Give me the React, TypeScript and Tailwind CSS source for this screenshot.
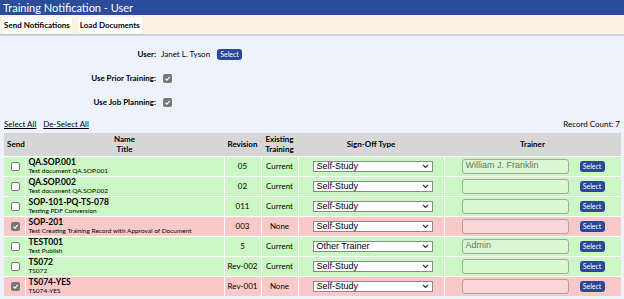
import React from "react";

type Row = {
  name: string;
  title: string;
  rev: string;
  existing: string;
  signOff: string;
  trainer: string;
  checked: boolean;
};

const rows: Row[] = [
  { name: "QA.SOP.001", title: "Test document QA.SOP.001", rev: "05", existing: "Current", signOff: "Self-Study", trainer: "William J. Franklin", checked: false },
  { name: "QA.SOP.002", title: "Test document QA.SOP.002", rev: "02", existing: "Current", signOff: "Self-Study", trainer: "", checked: false },
  { name: "SOP-101-PQ-TS-078", title: "Testing PDF Conversion", rev: "011", existing: "Current", signOff: "Self-Study", trainer: "", checked: false },
  { name: "SOP-201", title: "Test Creating Training Record with Approval of Document", rev: "003", existing: "None", signOff: "Self-Study", trainer: "", checked: true },
  { name: "TEST001", title: "Test Publish", rev: "5", existing: "Current", signOff: "Other Trainer", trainer: "Admin", checked: false },
  { name: "TS072", title: "TS072", rev: "Rev-002", existing: "Current", signOff: "Self-Study", trainer: "", checked: false },
  { name: "TS074-YES", title: "TS074-YES", rev: "Rev-001", existing: "None", signOff: "Self-Study", trainer: "", checked: true },
];

const Check = ({ checked }: { checked: boolean }) =>
  checked ? (
    <span className="inline-flex h-[9px] w-[9px] items-center justify-center rounded-[2px] bg-[#767676]">
      <svg width="7" height="7" viewBox="0 0 10 10">
        <path d="M2 5.2 L4.2 7.3 L8.2 2.6" fill="none" stroke="white" strokeWidth="1.8" />
      </svg>
    </span>
  ) : (
    <span className="inline-block h-[9px] w-[9px] rounded-[2px] border border-[#767676] bg-white" />
  );

const SelectBtn = () => (
  <span className="inline-flex h-[11px] w-[25px] items-center justify-center rounded-[3px] bg-[#2a4799] text-[7px] text-white">
    Select
  </span>
);

const App = () => {
  return (
    <div className="h-[299px] w-[624px] overflow-hidden bg-[#eef2fb] font-['Lato','Open_Sans',sans-serif] text-black">
      {/* Title bar */}
      <div className="flex h-[15px] items-center bg-[#2d4b9b] px-[3px] text-[11px] leading-none text-white">
        Training Notification - User
      </div>
      {/* Toolbar */}
      <div className="flex h-[21px] items-center gap-[6px] border-b-2 border-[#c3cfee] bg-[#fdf1e2] px-[2px] text-[8px] font-bold">
        <span className="rounded-[2px] bg-white px-[2px] py-[2px]">Send Notifications</span>
        <span className="rounded-[2px] bg-white px-[2px] py-[2px]">Load Documents</span>
      </div>

      {/* Options */}
      <div className="flex flex-col gap-[10px] pt-[11px] text-[8px]">
        <div className="flex h-[14px] items-center">
          <span className="w-[156px] text-right font-bold">User:</span>
          <span className="ml-[5px] w-[56px]">Janet L. Tyson</span>
          <SelectBtn />
        </div>
        <div className="flex h-[14px] items-center">
          <span className="w-[156px] text-right font-bold">Use Prior Training:</span>
          <span className="ml-[7px] flex"><Check checked /></span>
        </div>
        <div className="flex h-[14px] items-center">
          <span className="w-[156px] text-right font-bold">Use Job Planning:</span>
          <span className="ml-[7px] flex"><Check checked /></span>
        </div>
      </div>

      <div className="mt-[9px] flex items-center justify-between px-[4px] text-[8px]">
        <div className="flex gap-[7px] underline">
          <span>Select All</span>
          <span>De-Select All</span>
        </div>
        <span>Record Count: 7</span>
      </div>

      {/* Table */}
      <table className="ml-[4px] mt-[3px] w-[617px] table-fixed border-collapse">
        <colgroup>
          <col className="w-[21px]" />
          <col className="w-[199px]" />
          <col className="w-[37px]" />
          <col className="w-[37px]" />
          <col className="w-[146px]" />
          <col className="w-[177px]" />
        </colgroup>
        <thead>
          <tr className="h-[23px] bg-[#d6d6d6] text-[8px] font-bold leading-[10px]">
            <th className="pl-[3px] text-left">Send</th>
            <th className="text-center">
              Name
              <br />
              Title
            </th>
            <th>Revision</th>
            <th>
              Existing
              <br />
              Training
            </th>
            <th>Sign-Off Type</th>
            <th>Trainer</th>
          </tr>
        </thead>
        <tbody>
          {rows.map((r) => {
            const bg = r.checked ? "bg-[#f9c9c9]" : "bg-[#caf7c3]";
            const inputBg = r.checked ? "bg-[#fbd6d6]" : "bg-[#d8f8d1]";
            return (
              <tr key={r.name} className={`h-[20px] border-t border-white ${bg}`}>
                <td className="border-r border-white p-0 text-center">
                  <span className="flex justify-center pl-[3px]">
                    <Check checked={r.checked} />
                  </span>
                </td>
                <td className="border-r border-white p-0 pl-[3px]">
                  <div className="text-[8.5px] font-bold leading-[10px]">{r.name}</div>
                  <div className="text-[6.5px] leading-[8px]">{r.title}</div>
                </td>
                <td className="border-r border-white p-0 text-center text-[8px]">{r.rev}</td>
                <td className="border-r border-white p-0 text-center text-[8px]">{r.existing}</td>
                <td className="border-r border-white p-0">
                  <div className="ml-[14px] flex h-[11px] w-[120px] items-center justify-between border border-[#8a8a8a] bg-white pl-[3px] pr-[3px] font-['Liberation_Sans',Arial,sans-serif] text-[9px] leading-none">
                    <span>{r.signOff}</span>
                    <svg width="7" height="5" viewBox="0 0 7 5">
                      <path d="M1 1 L3.5 3.5 L6 1" fill="none" stroke="#333" strokeWidth="1.1" />
                    </svg>
                  </div>
                </td>
                <td className="p-0">
                  <div className="flex items-center">
                    <div
                      className={`ml-[17px] flex h-[15px] w-[107px] items-center rounded-[3px] border border-[#a5a5a5] ${inputBg} pl-[3px] font-['Liberation_Sans',Arial,sans-serif] text-[9px] text-[#6d6d6d]`}
                    >
                      {r.trainer}
                    </div>
                    <span className="ml-[11px] flex">
                      <SelectBtn />
                    </span>
                  </div>
                </td>
              </tr>
            );
          })}
        </tbody>
      </table>
    </div>
  );
};

export default App;
